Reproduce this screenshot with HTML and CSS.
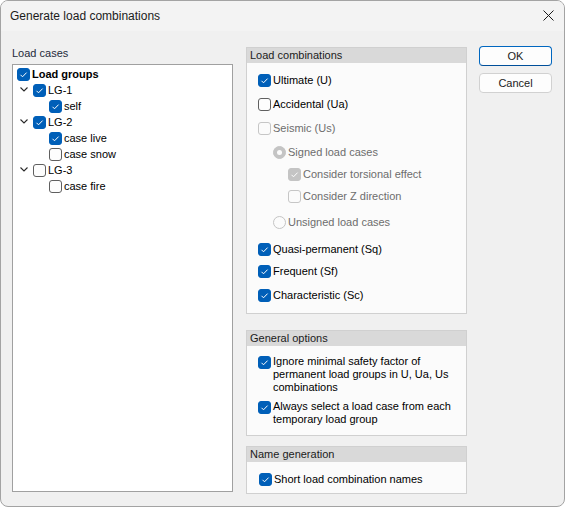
FILE: index.html
```html
<!DOCTYPE html>
<html>
<head>
<meta charset="utf-8">
<title>Generate load combinations</title>
<link rel="stylesheet" href="styles.css">
</head>
<body>
<div class="window">
  <div class="titlebar">
    <span class="title">Generate load combinations</span>
    <svg class="close" width="11" height="11" viewBox="0 0 11 11"><path d="M0.5 0.5 L10.5 10.5 M10.5 0.5 L0.5 10.5" stroke="#1a1a1a" stroke-width="1" fill="none"/></svg>
  </div>
  <div class="content">
    <div class="left">
      <div class="label">Load cases</div>
      <div class="tree">
        <div class="row l0"><span class="cb on"><svg width="11" height="11" viewBox="0 0 11 11"><path d="M2.5 5.8 L4.5 7.8 L8.6 3.6" stroke="#fff" stroke-width="1" fill="none"/></svg></span><span class="bold">Load groups</span></div>
        <div class="row l1"><span class="twisty"><svg width="8" height="5" viewBox="0 0 8 5"><path d="M0.5 0.5 L4 4 L7.5 0.5" stroke="#2b2b2b" stroke-width="1.1" fill="none"/></svg></span><span class="cb on"><svg width="11" height="11" viewBox="0 0 11 11"><path d="M2.5 5.8 L4.5 7.8 L8.6 3.6" stroke="#fff" stroke-width="1" fill="none"/></svg></span><span>LG-1</span></div>
        <div class="row l2"><span class="twisty"></span><span class="cb on"><svg width="11" height="11" viewBox="0 0 11 11"><path d="M2.5 5.8 L4.5 7.8 L8.6 3.6" stroke="#fff" stroke-width="1" fill="none"/></svg></span><span>self</span></div>
        <div class="row l1"><span class="twisty"><svg width="8" height="5" viewBox="0 0 8 5"><path d="M0.5 0.5 L4 4 L7.5 0.5" stroke="#2b2b2b" stroke-width="1.1" fill="none"/></svg></span><span class="cb on"><svg width="11" height="11" viewBox="0 0 11 11"><path d="M2.5 5.8 L4.5 7.8 L8.6 3.6" stroke="#fff" stroke-width="1" fill="none"/></svg></span><span>LG-2</span></div>
        <div class="row l2"><span class="twisty"></span><span class="cb on"><svg width="11" height="11" viewBox="0 0 11 11"><path d="M2.5 5.8 L4.5 7.8 L8.6 3.6" stroke="#fff" stroke-width="1" fill="none"/></svg></span><span>case live</span></div>
        <div class="row l2"><span class="twisty"></span><span class="cb"></span><span>case snow</span></div>
        <div class="row l1"><span class="twisty"><svg width="8" height="5" viewBox="0 0 8 5"><path d="M0.5 0.5 L4 4 L7.5 0.5" stroke="#2b2b2b" stroke-width="1.1" fill="none"/></svg></span><span class="cb"></span><span>LG-3</span></div>
        <div class="row l2"><span class="twisty"></span><span class="cb"></span><span>case fire</span></div>
      </div>
    </div>

    <div class="mid">
      <div class="panel p1">
        <div class="phead">Load combinations</div>
        <div class="pbody">
          <div class="row"><span class="cb on"><svg width="11" height="11" viewBox="0 0 11 11"><path d="M2.5 5.8 L4.5 7.8 L8.6 3.6" stroke="#fff" stroke-width="1" fill="none"/></svg></span><span>Ultimate (U)</span></div>
          <div class="row mt8"><span class="cb"></span><span>Accidental (Ua)</span></div>
          <div class="row mt8 dis"><span class="cb dis"></span><span>Seismic (Us)</span></div>
          <div class="row mt8 dis ind1"><span class="rb on"></span><span>Signed load cases</span></div>
          <div class="row mt6 dis ind2"><span class="cb dis on"><svg width="11" height="11" viewBox="0 0 11 11"><path d="M2.5 5.8 L4.5 7.8 L8.6 3.6" stroke="#fff" stroke-width="1" fill="none"/></svg></span><span>Consider torsional effect</span></div>
          <div class="row mt6 dis ind2"><span class="cb dis"></span><span>Consider Z direction</span></div>
          <div class="row mt10 dis ind1"><span class="rb"></span><span>Unsigned load cases</span></div>
          <div class="row mt11"><span class="cb on"><svg width="11" height="11" viewBox="0 0 11 11"><path d="M2.5 5.8 L4.5 7.8 L8.6 3.6" stroke="#fff" stroke-width="1" fill="none"/></svg></span><span>Quasi-permanent (Sq)</span></div>
          <div class="row mt6"><span class="cb on"><svg width="11" height="11" viewBox="0 0 11 11"><path d="M2.5 5.8 L4.5 7.8 L8.6 3.6" stroke="#fff" stroke-width="1" fill="none"/></svg></span><span>Frequent (Sf)</span></div>
          <div class="row mt8"><span class="cb on"><svg width="11" height="11" viewBox="0 0 11 11"><path d="M2.5 5.8 L4.5 7.8 L8.6 3.6" stroke="#fff" stroke-width="1" fill="none"/></svg></span><span>Characteristic (Sc)</span></div>
        </div>
      </div>

      <div class="panel p2">
        <div class="phead">General options</div>
        <div class="pbody">
          <div class="item"><span class="cb on"><svg width="11" height="11" viewBox="0 0 11 11"><path d="M2.5 5.8 L4.5 7.8 L8.6 3.6" stroke="#fff" stroke-width="1" fill="none"/></svg></span><span class="wrap">Ignore minimal safety factor of permanent load groups in U, Ua, Us combinations</span></div>
          <div class="item mt6"><span class="cb on"><svg width="11" height="11" viewBox="0 0 11 11"><path d="M2.5 5.8 L4.5 7.8 L8.6 3.6" stroke="#fff" stroke-width="1" fill="none"/></svg></span><span class="wrap">Always select a load case from each temporary load group</span></div>
        </div>
      </div>

      <div class="panel p3">
        <div class="phead">Name generation</div>
        <div class="pbody">
          <div class="row shift"><span class="cb on"><svg width="11" height="11" viewBox="0 0 11 11"><path d="M2.5 5.8 L4.5 7.8 L8.6 3.6" stroke="#fff" stroke-width="1" fill="none"/></svg></span><span>Short load combination names</span></div>
        </div>
      </div>
    </div>

    <div class="buttons">
      <div class="btn default">OK</div>
      <div class="btn">Cancel</div>
    </div>
  </div>
</div>
</body>
</html>
```

FILE: styles.css
```css
* { box-sizing: border-box; }
html, body { margin: 0; padding: 0; background: #ffffff; }
body {
  font-family: "Liberation Sans", Arial, sans-serif;
  font-size: 11px;
  line-height: 13px;
  color: #000;
}
.window {
  width: 565px;
  height: 507px;
  border: 1px solid #a3a3a3;
  border-radius: 8px;
  overflow: hidden;
  background: #f0f0f0;
  display: flex;
  flex-direction: column;
}
.titlebar {
  height: 30px;
  flex: none;
  background: #f3f3f3;
  display: flex;
  align-items: center;
  justify-content: space-between;
  padding: 0 10px 0 9px;
}
.title {
  font-size: 12px;
  line-height: 14px;
  color: #1b1b1b;
  padding-bottom: 1px;
}
.close { display: block; margin-top: -1px; }
.content {
  flex: 1;
  display: flex;
  padding: 16px 12px 0 11px;
}
.left {
  width: 221px;
  margin-right: 13px;
  display: flex;
  flex-direction: column;
}
.label {
  height: 17px;
  color: #1e2a3a;
}
.tree {
  height: 428px;
  background: #fff;
  border: 1px solid #a0a0a0;
  padding-top: 1px;
}
.row {
  height: 16px;
  display: flex;
  align-items: center;
  white-space: nowrap;
}
.tree .row { padding-left: 4px; }
.tree .row.l2 { padding-left: 20px; }
.twisty {
  width: 16px;
  height: 16px;
  flex: none;
  display: flex;
  align-items: center;
}
.twisty svg { display: block; margin-left: 3px; margin-top: -1px; }
.cb {
  width: 13px;
  height: 13px;
  flex: none;
  border: 1px solid #5f5f5f;
  border-radius: 3px;
  background: #fdfdfd;
  margin-right: 2px;
  display: flex;
  align-items: center;
  justify-content: center;
}
.cb svg { display: block; }
.cb.on { background: #005fb8; border-color: #005fb8; }
.cb.dis { border-color: #c6c6c6; background: #fbfbfb; }
.cb.dis.on { background: #c4c4c4; border-color: #c4c4c4; }
.rb {
  width: 13px;
  height: 13px;
  flex: none;
  border: 1px solid #c4c4c4;
  border-radius: 50%;
  background: #fbfbfb;
  margin-right: 2px;
  display: flex;
  align-items: center;
  justify-content: center;
}
.rb.on { background: #c4c4c4; }
.rb.on::after {
  content: "";
  width: 5px;
  height: 5px;
  border-radius: 50%;
  background: #fbfbfb;
}
.bold { font-weight: bold; }
.dis { color: #6d6d6d; }

.mid {
  width: 221px;
  margin-right: 12px;
  display: flex;
  flex-direction: column;
}
.panel {
  border: 1px solid #d0d0d0;
  background: #fbfbfb;
}
.phead {
  height: 15px;
  line-height: 15px;
  padding-left: 3px;
  background: #d9d9d9;
  color: #1b1b1b;
}
.pbody {
  display: flex;
  flex-direction: column;
  padding: 9px 4px 10px 11px;
}
.p2 { margin-top: 16px; }
.p2 .pbody { padding-bottom: 9px; }
.p3 { margin-top: 10px; }
.p3 .pbody { padding-bottom: 6px; }
.ind1 { padding-left: 15px; }
.ind2 { padding-left: 30px; }
.shift { padding-left: 1px; }
.mt6 { margin-top: 6px; }
.mt8 { margin-top: 8px; }
.mt10 { margin-top: 10px; }
.mt11 { margin-top: 11px; }
.item {
  display: flex;
  align-items: flex-start;
}
.item .cb { margin-top: 1px; }
.wrap { flex: 1; }

.buttons {
  width: 73px;
  display: flex;
  flex-direction: column;
  gap: 7px;
  margin-top: -1px;
}
.btn {
  height: 20px;
  border: 1px solid #d1d1d1;
  border-radius: 4px;
  background: #fdfdfd;
  display: flex;
  align-items: center;
  justify-content: center;
  color: #1b1b1b;
}
.btn.default {
  border-color: #0067c0;
  border-bottom-color: #004f9a;
}
```
